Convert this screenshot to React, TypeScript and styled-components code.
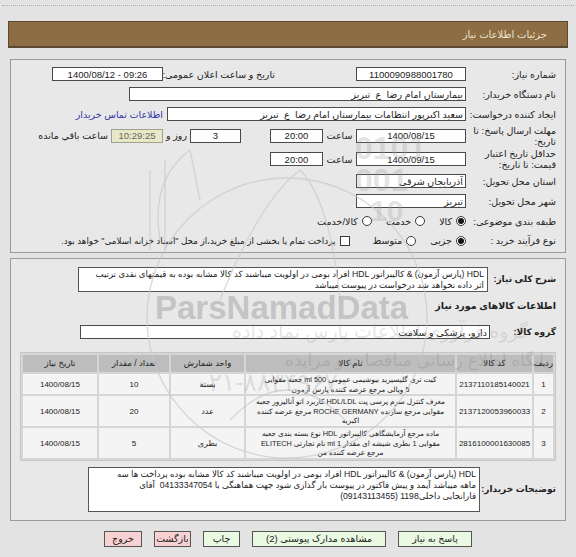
import React from "react";
import styled, { createGlobalStyle } from "styled-components";

const GlobalStyle = createGlobalStyle`
  html, body {
    margin: 0;
    padding: 0;
    background: #e3e3e3;
  }
  body {
    font-family: "Liberation Sans", "DejaVu Sans", sans-serif;
    font-size: 9px;
    color: #222;
  }
  * {
    box-sizing: border-box;
  }
`;

const Page = styled.div`
  position: relative;
  width: 576px;
  height: 557px;
  overflow: hidden;
  direction: rtl;
  padding: 0 8px;
`;

const TopRule = styled.div`
  height: 6px;
  margin: 0 -6px;
  border-bottom: 1px dotted #a8a8a8;
`;

const TitleBar = styled.div`
  margin-top: 15px;
  height: 27px;
  background: #8c6d44;
  border: 1px solid #5c4a30;
  border-bottom-width: 2px;
  color: #efe4cf;
  font-size: 10px;
  display: flex;
  align-items: center;
  padding-right: 20px;
`;

const Panel = styled.div<{ $top: number }>`
  margin: ${(p) => p.$top}px 2px 0;
  border: 1px solid #9c9c9c;
  background: #e8e8e8;
  padding: 4px 9px 2px 0;
`;

const Row = styled.div<{ $h?: number }>`
  display: flex;
  align-items: center;
  height: ${(p) => p.$h ?? 20}px;
`;

const Label = styled.div<{ $w?: number; $bold?: boolean }>`
  width: ${(p) => p.$w ?? 90}px;
  flex-shrink: 0;
  text-align: right;
  line-height: 11px;
  font-size: ${(p) => (p.$bold ? 9 : 9.5)}px;
  font-weight: ${(p) => (p.$bold ? "bold" : "normal")};
  white-space: ${(p) => (p.$bold ? "nowrap" : "normal")};
  color: #222;
`;

const InlineLabel = styled.div<{ $w?: number; $center?: boolean }>`
  ${(p) => (p.$w ? `width: ${p.$w}px;` : "")}
  flex-shrink: 0;
  text-align: ${(p) => (p.$center ? "center" : "right")};
  font-size: 9.5px;
  white-space: nowrap;
`;

const Spacer = styled.div<{ $w: number }>`
  width: ${(p) => p.$w}px;
  flex-shrink: 0;
`;

const Field = styled.div<{ $w: number; $start?: boolean; $ltr?: boolean; $muted?: boolean }>`
  width: ${(p) => p.$w}px;
  height: 14px;
  flex-shrink: 0;
  border: 1px solid ${(p) => (p.$muted ? "#a0a090" : "#4a4a4a")};
  background: ${(p) => (p.$muted ? "#e9e8c6" : "#fff")};
  color: ${(p) => (p.$muted ? "#666" : "#222")};
  display: flex;
  align-items: center;
  justify-content: ${(p) => (p.$start ? "flex-start" : "center")};
  direction: ${(p) => (p.$ltr ? "ltr" : "rtl")};
  padding: 0 2px;
  font-size: 9.5px;
  white-space: pre;
  overflow: hidden;
`;

const ContactLink = styled.a`
  margin-right: 4px;
  color: #3434a8;
  font-size: 9.5px;
  text-decoration: none;
  white-space: nowrap;
`;

const Radio = styled.span<{ $on?: boolean }>`
  width: 10px;
  height: 10px;
  flex-shrink: 0;
  border-radius: 50%;
  border: 1px solid #3a3a3a;
  background: #fff;
  margin-left: 4px;
  display: flex;
  align-items: center;
  justify-content: center;
  &::after {
    content: "";
    width: 6px;
    height: 6px;
    border-radius: 50%;
    background: ${(p) => (p.$on ? "#151515" : "transparent")};
  }
`;

const Check = styled.span`
  width: 10px;
  height: 10px;
  flex-shrink: 0;
  border: 1px solid #3a3a3a;
  background: #fff;
  margin-left: 5px;
`;

const OptText = styled.span<{ $gap?: number; $small?: boolean }>`
  font-size: ${(p) => (p.$small ? 8.8 : 9.5)}px;
  white-space: nowrap;
  margin-left: ${(p) => p.$gap ?? 14}px;
`;

const TextBox = styled.div<{ $w: number; $h: number }>`
  width: ${(p) => p.$w}px;
  height: ${(p) => p.$h}px;
  flex-shrink: 0;
  background: #fff;
  border: 1px solid #555;
  padding: 1px 3px;
  font-size: 8.6px;
  line-height: 11px;
  overflow: hidden;
`;

const Line = styled.div`
  white-space: pre;
`;

const SectionTitle = styled.div`
  margin-top: 8px;
  height: 12px;
  line-height: 12px;
  font-size: 9.5px;
  font-weight: bold;
`;

const Table = styled.table`
  width: 534px;
  margin: 13px 0 0 -7px;
  table-layout: fixed;
  border-collapse: separate;
  border-spacing: 2px;
  background: #d6d6d6;
  border: 1px solid #c6c6c6;
  font-size: 8px;
  line-height: 9.6px;
  direction: rtl;
`;

const Th = styled.th<{ $w: number }>`
  width: ${(p) => p.$w}px;
  height: 17px;
  background: #bdbdbd;
  font-weight: normal;
  font-size: 8.5px;
  color: #222;
  padding: 0;
  text-align: center;
`;

const Td = styled.td<{ $name?: boolean }>`
  background: #f4f4f4;
  padding: 1px 1px 0;
  text-align: center;
  vertical-align: middle;
  white-space: pre;
  overflow: hidden;
  font-size: ${(p) => (p.$name ? 7.3 : 8)}px;
`;

const Buttons = styled.div`
  margin-top: 10px;
  display: flex;
  justify-content: center;
  gap: 12px;
`;

const Button = styled.button<{ $w: number; $pink?: boolean }>`
  width: ${(p) => p.$w}px;
  height: 16px;
  padding: 0;
  border: 1px solid #555;
  background: ${(p) => (p.$pink ? "#f8d2d2" : "#e9f9e2")};
  font-family: inherit;
  font-size: 9.5px;
  color: #222;
  line-height: 14px;
`;

const Watermark = styled.div`
  position: absolute;
  inset: 0;
  pointer-events: none;
  direction: ltr;
`;

const Mark = styled.div<{ $x: number; $y: number; $size: number; $bold?: boolean; $color: string }>`
  position: absolute;
  left: ${(p) => p.$x}px;
  top: ${(p) => p.$y}px;
  font-size: ${(p) => p.$size}px;
  font-weight: ${(p) => (p.$bold ? "bold" : "normal")};
  color: ${(p) => p.$color};
  line-height: 1;
  white-space: nowrap;
`;

const items = [
  {
    n: "1",
    code: "2137110185140021",
    name: ["کیت تری گلیسیرید بیوشیمی عمومی 500 ml جعبه مقوایی", "5 ویالی مرجع عرضه کننده پارس آزمون"],
    unit: "بسته",
    qty: "10",
  },
  {
    n: "2",
    code: "2137120053960033",
    name: [
      "معرف کنترل سرم پرسی پت HDL/LDL کاربرد اتو آنالیزور جعبه",
      "مقوایی مرجع سازنده ROCHE GERMANY مرجع عرضه کننده",
      "اکبریه",
    ],
    unit: "عدد",
    qty: "20",
  },
  {
    n: "3",
    code: "2816100001630085",
    name: [
      "ماده مرجع آزمایشگاهی کالیبراتور HDL نوع بسته بندی جعبه",
      "مقوایی 1 بطری شیشه ای مقدار 1 ml نام تجارتی ELITECH",
      "مرجع عرضه کننده من",
    ],
    unit: "بطری",
    qty: "5",
  },
];

function Lines({ lines }: { lines: string[] }) {
  return (
    <>
      {lines.map((l, i) => (
        <Line key={i}>{l}</Line>
      ))}
    </>
  );
}

export default function App() {
  return (
    <Page>
      <GlobalStyle />
      <TopRule />
      <TitleBar>جزئیات اطلاعات نیاز</TitleBar>

      <Panel $top={11}>
        <Row>
          <Label>شماره نیاز:</Label>
          <Field $w={110} $ltr>1100090988001780</Field>
          <Spacer $w={81} />
          <InlineLabel $w={112}>تاریخ و ساعت اعلان عمومی:</InlineLabel>
          <Field $w={111} $ltr>1400/08/12 - 09:26</Field>
        </Row>
        <Row>
          <Label>نام دستگاه خریدار:</Label>
          <Field $w={337} $start>بیمارستان امام رضا  ع  تبریز</Field>
        </Row>
        <Row>
          <Label>ایجاد کننده درخواست:</Label>
          <Field $w={299} $start>سعید اکبرپور انتظامات بیمارستان امام رضا  ع  تبریز</Field>
          <ContactLink href="#">اطلاعات تماس خریدار</ContactLink>
        </Row>
        <Row $h={23}>
          <Label>
            مهلت ارسال پاسخ: تا
            <br />
            تاریخ:
          </Label>
          <Field $w={110} $ltr>1400/08/15</Field>
          <InlineLabel $w={33} $center>ساعت</InlineLabel>
          <Field $w={53} $ltr>20:00</Field>
          <Spacer $w={29} />
          <Field $w={51}>3</Field>
          <InlineLabel $w={27} $center>روز و</InlineLabel>
          <Field $w={52} $ltr $muted>10:29:25</Field>
          <Spacer $w={3} />
          <InlineLabel>ساعت باقي مانده</InlineLabel>
        </Row>
        <Row $h={24}>
          <Label>
            حداقل تاریخ اعتبار
            <br />
            قیمت: تا تاریخ:
          </Label>
          <Field $w={110} $ltr>1400/09/15</Field>
          <InlineLabel $w={33} $center>ساعت</InlineLabel>
          <Field $w={53} $ltr>20:00</Field>
        </Row>
        <Row>
          <Label>استان محل تحویل:</Label>
          <Field $w={110} $start>آذربایجان شرقی</Field>
        </Row>
        <Row>
          <Label>شهر محل تحویل:</Label>
          <Field $w={110} $start>تبریز</Field>
        </Row>
        <Row>
          <Label>طبقه بندی موضوعی:</Label>
          <Radio $on />
          <OptText>کالا</OptText>
          <Radio />
          <OptText>خدمت</OptText>
          <Radio />
          <OptText>کالا/خدمت</OptText>
        </Row>
        <Row $h={19}>
          <Label>نوع فرآیند خرید :</Label>
          <Radio $on />
          <OptText>جزیی</OptText>
          <Radio />
          <OptText $gap={22}>متوسط</OptText>
          <Check />
          <OptText $gap={0} $small>
            پرداخت تمام یا بخشی از مبلغ خرید،از محل "اسناد خزانه اسلامی" خواهد بود.
          </OptText>
        </Row>
      </Panel>

      <Panel $top={5}>
        <Row $h={25} style={{ marginTop: 4 }}>
          <Label $w={68} $bold>شرح کلی نیاز:</Label>
          <TextBox $w={410} $h={25}>
            <Lines
              lines={[
                "HDL (پارس آزمون) & کالیبراتور HDL افراد بومی در اولویت میباشند کد کالا مشابه بوده به قیمتهای نقدی ترتیب",
                "اثر داده نخواهد شد درخواست در پیوست میباشد",
              ]}
            />
          </TextBox>
        </Row>
        <SectionTitle>اطلاعات کالاهای مورد نیاز</SectionTitle>
        <Row $h={14} style={{ marginTop: 13 }}>
          <Label $w={66} $bold>گروه کالا:</Label>
          <Field $w={410} $start>دارو، پزشکی و سلامت</Field>
        </Row>
        <Table>
          <thead>
            <tr>
              <Th $w={19}>ردیف</Th>
              <Th $w={75}>کد کالا</Th>
              <Th $w={209}>نام کالا</Th>
              <Th $w={73}>واحد شمارش</Th>
              <Th $w={70}>تعداد / مقدار</Th>
              <Th $w={74}>تاریخ نیاز</Th>
            </tr>
          </thead>
          <tbody>
            {items.map((it) => (
              <tr key={it.n}>
                <Td>{it.n}</Td>
                <Td>{it.code}</Td>
                <Td $name>
                  <Lines lines={it.name} />
                </Td>
                <Td>{it.unit}</Td>
                <Td>{it.qty}</Td>
                <Td>1400/08/15</Td>
              </tr>
            ))}
          </tbody>
        </Table>
        <Row $h={45} style={{ marginTop: 6, marginBottom: 6 }}>
          <Label $w={76} $bold>توضیحات خریدار:</Label>
          <TextBox $w={392} $h={45}>
            <Lines
              lines={[
                "HDL (پارس آزمون) & کالیبراتور HDL افراد بومی در اولویت میباشند کد کالا مشابه بوده پرداخت ها سه",
                "ماهه میباشد آیمد و پیش فاکتور در پیوست بار گذاری شود جهت هماهنگی با 04133347054  آقای",
                "قارانجایی داخلی1198 (09143113455)",
              ]}
            />
          </TextBox>
        </Row>
      </Panel>

      <Buttons>
        <Button $w={74}>پاسخ به نیاز</Button>
        <Button $w={134}>مشاهده مدارک پیوستی (2)</Button>
        <Button $w={37}>چاپ</Button>
        <Button $w={37} $pink>بازگشت</Button>
        <Button $w={38} $pink>خروج</Button>
      </Buttons>

      <Watermark>
        <svg width="576" height="557" style={{ position: "absolute", left: 0, top: 0 }}>
          <g fill="none" stroke="#c9c9c9" strokeWidth="1.3" opacity="0.7">
            <circle cx="287" cy="318" r="140" />
            <path d="M160 240 Q150 180 190 150 L200 200" />
            <path d="M150 170 L150 250 M165 160 L165 250" />
            <path d="M220 300 Q260 200 300 170 Q330 200 340 300" />
            <path d="M230 420 Q287 360 345 420" />
          </g>
        </svg>
        <Mark $x={355} $y={132} $size={32} $bold $color="rgba(160,160,160,0.3)">0101</Mark>
        <Mark $x={355} $y={164} $size={32} $bold $color="rgba(160,160,160,0.3)">001</Mark>
        <Mark $x={370} $y={196} $size={30} $bold $color="rgba(160,160,160,0.3)">10</Mark>
        <Mark $x={155} $y={291} $size={33} $bold $color="rgba(150,150,150,0.45)">ParsNamadData</Mark>
        <Mark $x={232} $y={322} $size={19} $color="rgba(150,150,150,0.25)">گروه فرآوری اطلاعات پارس نماد داده</Mark>
        <Mark $x={285} $y={352} $size={17} $color="rgba(120,120,120,0.25)">پایگاه اطلاع رسانی مناقصات و مزایده</Mark>
        <Mark $x={195} $y={370} $size={25} $color="rgba(120,120,120,0.2)">۰۲۱-۸۸۳۴۹۶۷۰</Mark>
      </Watermark>
    </Page>
  );
}
